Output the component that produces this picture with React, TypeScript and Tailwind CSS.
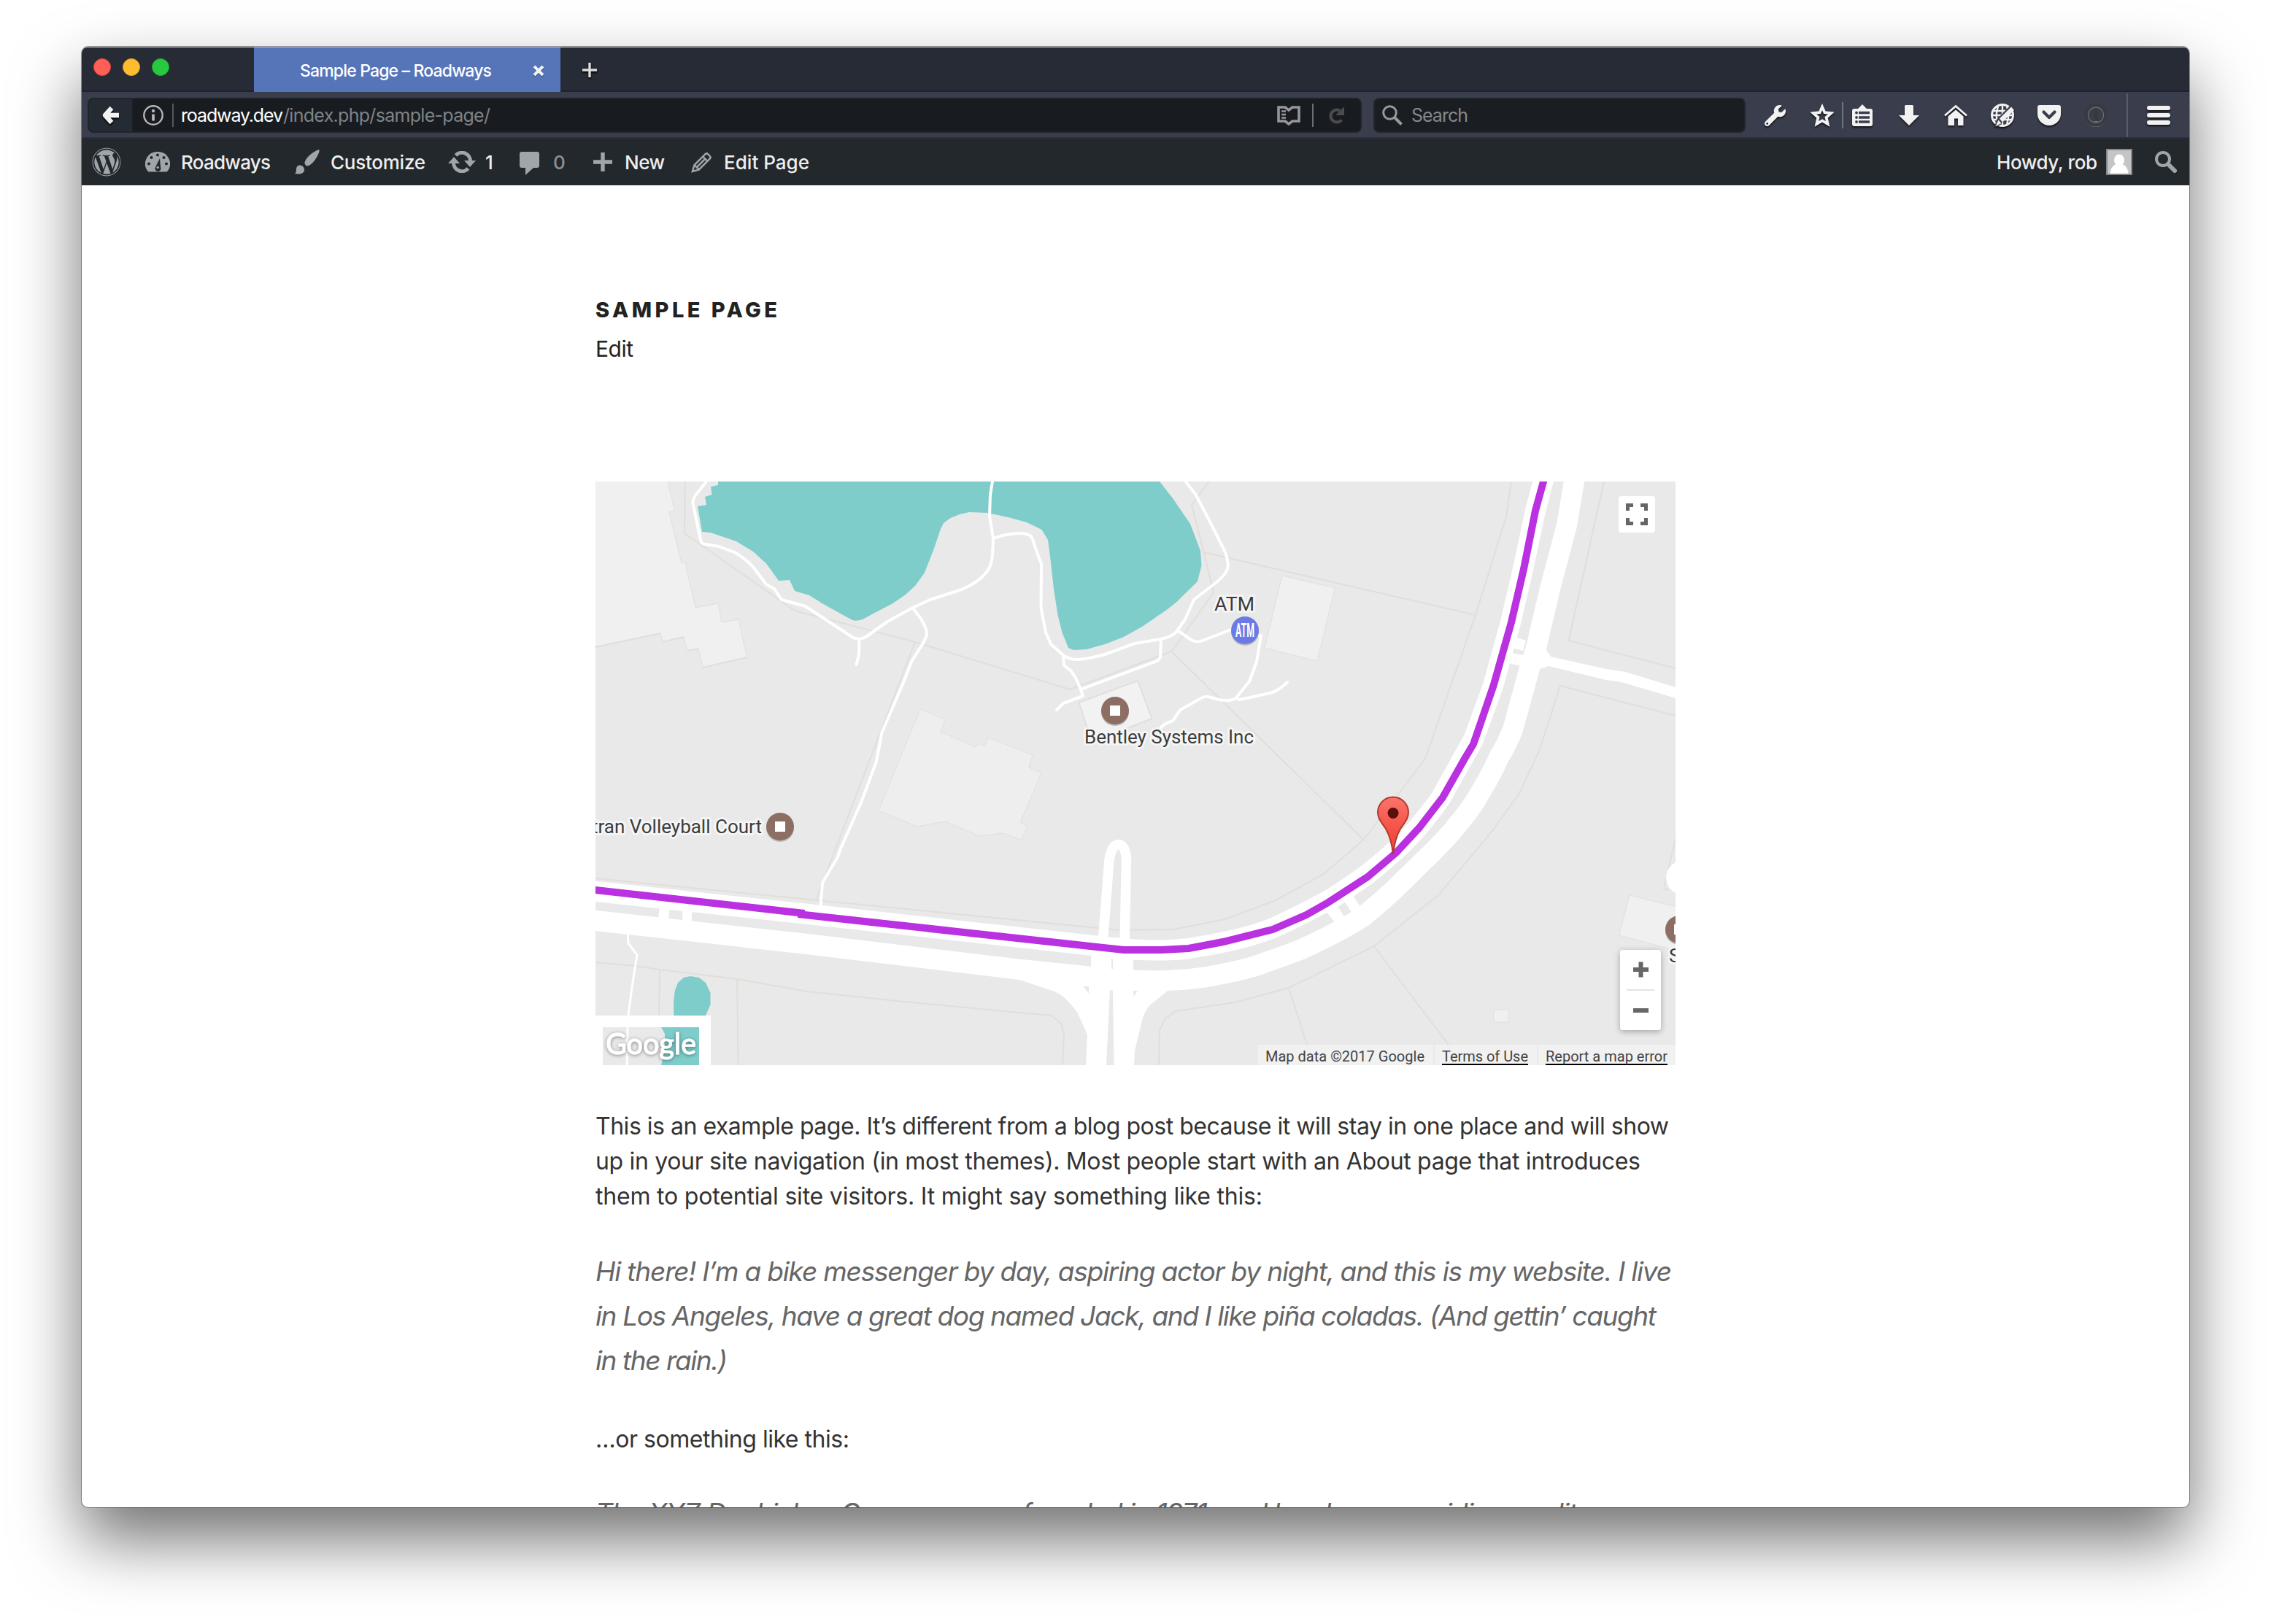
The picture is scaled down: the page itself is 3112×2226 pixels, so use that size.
import { useLayoutEffect, useRef, type ReactNode } from "react";
import { FaWordpress, FaWrench } from "react-icons/fa";

/** A single line of text whose tracking is adjusted to fill the given width. */
function Line({ w, className = "", children }: { w: number; className?: string; children: ReactNode }) {
  const ref = useRef<HTMLSpanElement>(null);
  useLayoutEffect(() => {
    const el = ref.current;
    if (!el) return;
    el.style.letterSpacing = "0px";
    const natural = el.getBoundingClientRect().width;
    const count = (el.textContent ?? "").length;
    if (count > 1) el.style.letterSpacing = `${(w - natural) / (count - 1)}px`;
  }, [w]);
  return (
    <div className={`shrink-0 whitespace-nowrap ${className}`} style={{ width: w }}>
      <span ref={ref} className="inline-block whitespace-nowrap">
        {children}
      </span>
    </div>
  );
}

function TabStrip() {
  return (
    <div className="flex h-[62px] shrink-0 items-center border-b-2 border-[#1f222b] bg-[#272b35] shadow-[inset_0_2px_0_#6f747c]">
      <div className="flex w-[236px] gap-4 pb-1 pl-4">
        <div className="size-6 rounded-full border border-[#e2463f] bg-[#ff5f57]" />
        <div className="size-6 rounded-full border border-[#e0a028] bg-[#ffbd2e]" />
        <div className="size-6 rounded-full border border-[#1aab29] bg-[#28c940]" />
      </div>
      <div className="-mb-0.5 flex h-[62px] w-[420px] items-center bg-[#5675b9] pl-[63px] pt-1 shadow-[inset_0_2px_0_#8099c9]">
        <Line w={263} className="text-[23px] font-medium text-white">Sample Page – Roadways</Line>
        <svg viewBox="0 0 16 16" className="ml-[56px] size-4 drop-shadow-[0_1px_0_#2a3d66]">
          <path d="M2 2l12 12M14 2L2 14" stroke="#f2f4f8" strokeWidth="4" />
        </svg>
      </div>
      <svg viewBox="0 0 20 20" className="ml-[30px] mt-1 size-5 drop-shadow-[0_2px_1px_#000]">
        <path d="M10 0v20M0 10h20" stroke="#dcdcdc" strokeWidth="3.4" />
      </svg>
    </div>
  );
}

function AddressBar() {
  return (
    <div className="flex h-12 w-[1746px] items-center overflow-hidden rounded-lg border-2 border-[#20242b] bg-[#181b1f]">
      <div className="flex h-full w-[61px] items-center justify-center border-r-2 border-[#1c2026] bg-[#252b33]">
        <svg viewBox="0 0 24 26" className="h-[26px] w-6 drop-shadow-[0_2px_1px_#000]">
          <path d="M13 3L4 13l9 10M5 13h18" fill="none" stroke="#f2f2f2" strokeWidth="6.4" strokeLinejoin="round" />
        </svg>
      </div>
      <svg viewBox="0 0 28 28" className="ml-[13px] size-7">
        <circle cx="14" cy="14" r="12.7" fill="none" stroke="#b5b6b8" strokeWidth="2.4" />
        <circle cx="14" cy="8" r="2.2" fill="#b5b6b8" />
        <path d="M14 12.5v9" stroke="#b5b6b8" strokeWidth="3.8" />
      </svg>
      <div className="ml-3 h-8 w-0.5 bg-[#55585f]" />
      <Line w={140} className="ml-2.5 pt-0.5 text-[25px] text-white">roadway.dev</Line>
      <Line w={284} className="pt-0.5 text-[25px] text-[#7f8388]">/index.php/sample-page/</Line>
      <svg viewBox="0 0 32 28" className="ml-auto h-7 w-8" fill="none" stroke="#95979b">
        <path d="M2 3h9l5 4 5-4h9v19h-9l-5 4-5-4H2z" strokeWidth="3.6" />
        <path d="M6 8.5h6M6 13h6M6 17.5h6" strokeWidth="2.4" />
      </svg>
      <div className="ml-4 h-8 w-0.5 bg-[#6b6e75]" />
      <svg viewBox="0 0 22 24" className="ml-5 mr-[22px] h-6 w-[22px]">
        <path d="M18.5 18.5A8.5 8.5 0 1 1 16 5.5" fill="none" stroke="#4b4c4e" strokeWidth="4.2" />
        <path d="M22 0v12H10z" fill="#4b4c4e" />
      </svg>
    </div>
  );
}

function ToolbarIcons() {
  const glow = "shrink-0 drop-shadow-[0_2px_1px_rgba(0,0,0,0.7)]";
  return (
    <>
      <FaWrench className={`ml-[26px] size-[29px] text-[#f2f2f2] ${glow}`} />
      <svg viewBox="0 0 32 32" className={`ml-[34px] size-8 ${glow}`}>
        <path d="M16 4.500l3.400 7.700 8.700.9-6.500 5.900 2 8.900-7.600-4.500-7.600 4.500 2-8.900-6.500-5.900 8.700-.9z" fill="none" stroke="#f2f2f2" strokeWidth="3.800" />
      </svg>
      <div className="ml-[11px] h-9 w-0.5 bg-[#70747e]" />
      <svg viewBox="0 0 28 30" className={`ml-3 h-[30px] w-7 ${glow}`}>
        <path d="M3 6h5l6-6 6 6h5a3 3 0 0 1 3 3v18a3 3 0 0 1-3 3H3a3 3 0 0 1-3-3V9a3 3 0 0 1 3-3z" fill="#f2f2f2" />
        <path d="M9 11.500h15M9 18h15M9 24h15" stroke="#3a3e4b" strokeWidth="3.400" />
        <g fill="#3a3e4b">
          <circle cx="6" cy="11.500" r="1.900" />
          <circle cx="6" cy="18" r="1.900" />
          <circle cx="6" cy="24" r="1.900" />
        </g>
      </svg>
      <svg viewBox="0 0 28 28" className={`ml-9 size-7 ${glow}`}>
        <path d="M8 1.500Q8 0 9.500 0h9Q20 0 20 1.500V14h8L14 28 0 14h8z" fill="#f2f2f2" />
      </svg>
      <svg viewBox="0 0 32 28" className={`ml-[34px] h-7 w-8 ${glow}`}>
        <path d="M1 14.500L16 1.500l15 13" fill="none" stroke="#f2f2f2" strokeWidth="2.800" />
        <path d="M5.500 15.500L16 6.500l10.500 9V28H19V18.500h-5V28H5.500z" fill="#f2f2f2" />
      </svg>
      <svg viewBox="0 0 32 32" className={`ml-8 size-8 ${glow}`}>
        <circle cx="16" cy="16" r="14.500" fill="#3a3e4b" stroke="#f2f2f2" strokeWidth="3" />
        <path d="M16 2v28M2 16h28M4 10h24M4 22h24M10 4c-3 8-3 16 0 24M22 4c3 8 3 16 0 24" fill="none" stroke="#f2f2f2" strokeWidth="2.400" />
        <path d="M5 32l3-10L28 1l5 5-21 24z" fill="#3a3e4b" />
        <path d="M12 20.500L28 4.500l4 4.500L16 25.500z" fill="#f2f2f2" />
        <path d="M10.500 22.500l4 4.500L6.500 31z" fill="#f2f2f2" />
      </svg>
      <svg viewBox="0 0 32 28" className={`ml-8 h-7 w-8 ${glow}`}>
        <path d="M3 0h26q3 0 3 3v9a16 16 0 0 1-32 0V3q0-3 3-3z" fill="#f2f2f2" />
        <path d="M8.500 9.500L16 17l7.500-7.500" fill="none" stroke="#3a3e4b" strokeWidth="4.200" strokeLinecap="round" strokeLinejoin="round" />
      </svg>
      <svg viewBox="0 0 32 32" className="ml-8 size-8 shrink-0">
        <circle cx="16" cy="17.200" r="14" fill="none" stroke="#5f6470" strokeWidth="2" />
        <circle cx="16" cy="15.500" r="13.500" fill="none" stroke="#3a3a3c" strokeWidth="4.500" />
        <circle cx="16" cy="15.800" r="10.600" fill="none" stroke="#666b77" strokeWidth="1.200" />
        <path d="M13 8h6v6l-1 2 1 2v5h-6v-6l1-1-1-2z" fill="#39393b" />
        <path d="M13 24.800h6" stroke="#6a6f7b" strokeWidth="1.600" />
      </svg>
      <div className="ml-[26px] h-full w-0.5 bg-[#5a5d69]" />
      <div className="ml-[26px] mr-[26px] flex w-8 flex-col gap-1 drop-shadow-[0_2px_1px_rgba(0,0,0,0.7)]">
        <div className="h-1.5 rounded-[3px] bg-[#f2f2f2]" />
        <div className="h-1.5 rounded-[3px] bg-[#f2f2f2]" />
        <div className="h-1.5 rounded-[3px] bg-[#f2f2f2]" />
      </div>
    </>
  );
}

function NavBar() {
  return (
    <div className="flex h-16 shrink-0 items-center border-b-2 border-[#2c303a] bg-[#3a3e4c] pl-2 pt-0.5">
      <AddressBar />
      <div className="ml-4 flex h-12 w-[510px] items-center rounded-lg border-2 border-[#22262c] bg-[#1a1e22]">
        <svg viewBox="0 0 28 28" className="ml-2.5 size-7" fill="none" stroke="#97999c">
          <circle cx="10.500" cy="10.500" r="8.800" strokeWidth="3" />
          <path d="M16.500 16.500l10 10" strokeWidth="4" />
        </svg>
        <Line w={78} className="ml-3 pt-0.5 text-[25px] text-[#84888d]">Search</Line>
      </div>
      <ToolbarIcons />
    </div>
  );
}

function AdminBar() {
  return (
    <div className="flex h-16 shrink-0 items-center bg-[#23282d] text-[26px] font-medium text-[#eeeeee]">
      <FaWordpress className="ml-3.5 size-10 shrink-0 text-[#a0a5aa]" />
      <svg viewBox="0 0 34 28" className="ml-[33px] h-7 w-[34px] shrink-0">
        <path d="M17 0a16.500 16.500 0 0 1 14 26q-1 1.500-2.500 1.500h-23Q4 27.500 3 26A16.500 16.500 0 0 1 17 0z" fill="#a0a5aa" />
        <g fill="#23282d">
          <circle cx="17" cy="4.500" r="2" />
          <circle cx="8.500" cy="8" r="2" />
          <circle cx="25.500" cy="8" r="2" />
          <circle cx="5" cy="16.500" r="2" />
          <circle cx="29" cy="16.500" r="2" />
          <path d="M20 9l1 12a4 4 0 1 1-7 0z" />
        </g>
        <circle cx="17.200" cy="21.500" r="1.800" fill="#a0a5aa" />
      </svg>
      <Line w={123} className="ml-[15px]">Roadways</Line>
      <svg viewBox="0 0 34 34" className="ml-[33px] size-[34px] shrink-0" fill="#a0a5aa">
        <path d="M33.500.5c1 2-3 11-9 17.500-3 3-6 4.500-8 4.500-2-.5-3-2.500-3-4.500 0-2 2-5.500 5-8.500C24.500 4 32-.5 33.500.5z" />
        <path d="M6.500 21.500c4 0 7 3 6.500 7-.5 4-6 6-13 4.500 3-2.500 1-4.500 2.500-8.500.7-2 2-3 4-3z" />
      </svg>
      <Line w={130} className="ml-[15px]">Customize</Line>
      <svg viewBox="0 0 38 30" className="ml-[31px] h-[30px] w-[38px] shrink-0">
        <path d="M10.500 6A11.500 11.500 0 0 1 30.500 14" fill="none" stroke="#a0a5aa" strokeWidth="5" />
        <path d="M27.500 24A11.500 11.500 0 0 1 7.500 16" fill="none" stroke="#a0a5aa" strokeWidth="5" />
        <path d="M22 13h16l-8 9zM0 17h16L8 8z" fill="#a0a5aa" />
      </svg>
      <Line w={11} className="ml-[13px]">1</Line>
      <svg viewBox="0 0 27 32" className="ml-9 mt-1 h-8 w-[27px] shrink-0">
        <path d="M3 0h21q3 0 3 3v16q0 3-3 3h-5L8 32V22H3q-3 0-3-3V3q0-3 3-3z" fill="#a0a5aa" />
      </svg>
      <Line w={15} className="ml-[19px] text-[#8c9094]">0</Line>
      <svg viewBox="0 0 28 28" className="ml-[39px] size-7 shrink-0">
        <path d="M14 1v26M1 14h26" stroke="#a0a5aa" strokeWidth="5.400" />
      </svg>
      <Line w={55} className="ml-4">New</Line>
      <svg viewBox="0 0 30 30" className="ml-9 size-[29px] shrink-0" fill="none" stroke="#a0a5aa" strokeWidth="2.600">
        <path d="M2 28l2.500-9L20 3.500q2-2 4 0l2.500 2.500q2 2 0 4L11 25.500zM17 7l6 6M5 19l6 6M20 10L8 22" />
      </svg>
      <Line w={117} className="ml-4">Edit Page</Line>
      <Line w={138} className="ml-auto">Howdy, rob</Line>
      <svg viewBox="0 0 36 36" className="ml-3 size-9 shrink-0">
        <rect width="36" height="36" fill="#82878c" />
        <rect x="2" y="2" width="32" height="32" fill="#c5c5c5" />
        <ellipse cx="18" cy="15.500" rx="7" ry="8" fill="#fff" />
        <path d="M5.500 34c.5-7 4-12 9-13h7c5 1 8.500 6 9 13z" fill="#fff" />
      </svg>
      <svg viewBox="0 0 30 30" className="ml-[31px] mr-[17px] size-[30px] shrink-0" fill="none" stroke="#a0a5aa">
        <circle cx="11" cy="11" r="9" strokeWidth="4" />
        <path d="M18 18l9 9" strokeWidth="6" strokeLinecap="round" />
      </svg>
    </div>
  );
}

function PlaceDot({ x, y }: { x: number; y: number }) {
  return (
    <g transform={`translate(${x} ${y})`}>
      <circle cy="2" r="19" fill="#b9b9b9" />
      <circle r="19" fill="#8d6e63" />
      <rect x="-7" y="-7" width="14" height="14" fill="#fff" />
    </g>
  );
}

function MapDrawing() {
  return (
    <svg viewBox="0 0 1480 800" className="block h-[800px] w-[1480px]">
      <defs>
        <linearGradient id="pin" x1="0" y1="0" x2="0" y2="1">
          <stop offset="0" stopColor="#fb7469" />
          <stop offset="0.7" stopColor="#f44a3f" />
        </linearGradient>
        <filter id="soft" x="-20%" y="-20%" width="140%" height="150%">
          <feDropShadow dx="0" dy="1" stdDeviation="2.500" floodColor="#000" floodOpacity="0.45" />
        </filter>
      </defs>
      <rect width="1480" height="800" fill="#e9e9e9" />

      {/* buildings */}
      <g fill="#f0f0f0" stroke="#e1dfdc" strokeWidth="1">
        <path d="M-2-2H99V0L108.500 40 101 42 118 112 123 111 137 173 168 167 173 193 196 189 207.500 241 147 255 141 229 126 232 121 213 92 220 89 208 -2 227z" />
        <path fill="#eeeeee" d="M445 312L479 326 473 343 521 364 525 359 533 362 539 351 599 375 594 392 611 399 582.500 467 592 472 583.500 491 558 482 526 486 480 466 440 473 388 451z" />
        <path d="M941 129L1013.500 146 989 246 917 228z" />
        <path strokeWidth="2" fill="#f2f2f2" d="M743 273L762.500 325 680 357 662.500 303z" />
        <path d="M1417 567L1482 583V643L1402.500 622z" />
        <path d="M1231 724h20v17h-20z" />
      </g>

      {/* parcel lines */}
      <g fill="none" stroke="#e2ded8" strokeWidth="2">
        <path d="M0 227L89 208M92 220L121 213M126 232L141 229M147 255L207.500 241" />
        <path d="M123 0L122 71 273 177 438 220 650 285 789.500 233 847 152 833.500 97 817 32 841 0" />
        <path d="M833.500 97L1206 183M789.500 233L1052.500 491M438 220L302 574" />
        <path d="M1255 0L1248 48 1206 183 1137 380 1052.500 491 998 538 932 574 863 600 792 614 717 615 688 612 0 544" />
        <path d="M1382 0L1333.500 218 1480 256" />
        <path d="M1480 321L1322 280 1293 370 1265.500 428 1228 480 1156 566 1067 637 950 694 876 714 795 726 780 737 773 752 772 800" />
        <path d="M1067 637L1190 800M950 694L984 800" />
        <path d="M0 659L54 664 88 669 194 682 290 699 423 713 625 732 638 743 642 758 640 800M88 669L86 800M194 682L195.500 800" />
        <path d="M1480 490L1464 558 1470 560" />
      </g>

      {/* lakes */}
      <g fill="#7ecdcb">
        <path d="M168 0V5L158 7 159.500 18 150 21 152 32 140 34 146 69 157.500 70 193 82 216 96 234.500 113 251 136 266 135 273 150 293 156 310.500 167 341 184 352 190 Q357 192 366 189L384.500 179 407.500 167 425 155 438 143 451 125 463.500 93 473 65 477 57 486.500 50 499 45 512 42 537.500 43 565.500 49 591 56 611.500 66 620 80 623 103 628 147 633.500 183 639.500 207 648 228 655 231 673 230 698 223 724 213 749 199 784 175 796.500 165 825 137 830.500 115 829 95 815 58 791 23 773 0z" />
        <path d="M130 678L121 680 113 687 109 697 107 713 107.500 740H148L151 732 157.500 717V701L151 687 142 680z" />
      </g>

      {/* footpaths */}
      <g fill="none" stroke="#fff" strokeWidth="4" strokeLinejoin="round" strokeLinecap="round">
        <path d="M152 0L138.500 17Q133 24 133.500 30L144 80Q145 86 151 86L169 89 190.500 97 Q206 106 216 117L234 141 245 147 255 162 287.500 171 310.500 186 351.500 213Q361 219 372 212L400 192 434.500 173 458.500 162 499 149Q512 144 522 137T537.500 122 544 100L545 78 540 47 541 18 544 0" />
        <path d="M361.500 216L361 237 357.500 251" />
        <path d="M434.500 173L446 188Q456 205 453.500 212L448 223 433 247 423 273 392 345 389.500 360 384.500 385 364 440 336 503 331 517 321 533 311 550 308.500 582" />
        <path d="M545 78Q565 71 581 71T599 79 611 113L610.500 173 617 207 624 223 641 238Q649 244 660 244T698 237L739 222 775 216Q793 212 797.500 204L808.500 188 820 162 846 142 Q862 130 865.500 121T862 95L841 53 822.500 18Q815 8 807-2" />
        <path d="M641 238L642 252 651 259 657.500 268 665 285 668 294 641 304 632 313" />
        <path d="M665 285L767 247Q773 245 774 240L775 216" />
        <path d="M797.500 204L815 216Q823 222 832 218L871 203" />
        <path d="M909 211h3L906 247 896 274 877.500 297" />
        <path d="M948 275Q936 287 924.500 290L883 299 877.500 297Q869 302 854 299L843 296Q836 293 830 297L801.500 313 791 328Q776 333 773 340" />
        <path strokeWidth="3" d="M44 618L45 633 57 649 50 693 44 740" />
      </g>

      {/* roads */}
      <g fill="none" stroke="#fff" strokeWidth="28" strokeLinejoin="round">
        <path d="M-20 560L0 562 282 592 700 638C740 643 780 644 813 640C850 634 890 627 926 613C960 598 980 587 1003 575C1025 562 1042 549 1057 539C1072 527 1086 515 1096 506C1109 494 1119 484 1128 473C1141 457 1152 444 1160 431C1170 412 1180 396 1186 384L1203 354 1230 280 1254 193 1271 120 1288 40 1298.500 0 1303-20" />
        <path d="M-20 600L0 602 290 634 578 668.500 680 679C715 684 750 684.500 780 684C805 683 830 681 848 677C870 673 890 669 909 662.500C932 654 952 648 970 640C1000 626 1028 612 1051 597C1072 580 1088 566 1102 552L1144 511C1158 497 1169 486 1179 473C1192 458 1204 442 1212 427C1225 406 1232 392 1239 376C1248 362 1253 350 1257 340L1280 256 1289 228 1308 147 1331 60 1341 0 1344-20" />
        <path d="M695 634L704 518Q708 497 717 497.500T727.500 518L725 634" strokeWidth="13.500" />
      </g>
      <g fill="#fff">
        <path d="M1301 228L1309 240 1385 257 1411 261 1480 282V297L1406 275 1385 272 1306 253 1294 257 1285 240z" />
        <path d="M1260 213L1275 218 1271 232 1256 228zM1256 235L1272 238 1268 253 1251 249zM88 583L101 585 100 603 86 600zM119 587L132 589V606L119 604zM1002 590L1017 582 1027 598 1014 606zM1026 575L1038 568 1049 584 1037 592z" />
        <path d="M679 645H737V690H679z" />
        <path d="M570 676L578 682 629 699Q640 704 647 712 656 722 660 727L674 758 672 800H738L739 780 750 735Q753 726 759.500 718L784 698 780 680z" />
        <circle cx="1490" cy="543" r="23" />
      </g>
      <path d="M707 654h2v14h-2zM705 697L709 698 710.500 800H700zM669 692h7v10zM737 698h6L737.500 706z" fill="#e9e9e9" />

      {/* traced route */}
      <path
        d="M-5 559.500L0 560 282 591.500V593.500L724 642H775.500L813 640 860 631 928 614 974 594 1004 577 1058 542 1097 509 1128.500 475 1161 433 1191 380 1203 360 1230.500 280 1255 193 1272 120 1288 40 1299 0 1302-10"
        fill="none"
        stroke="#b931e0"
        strokeWidth="10"
      />

      {/* places */}
      <g fontFamily="Roboto, sans-serif" fontSize="26" fill="#3c3c3c" stroke="#f5f5f5" strokeWidth="6" strokeLinejoin="round" paintOrder="stroke">
        <text x="670" y="359" textLength="232" lengthAdjust="spacingAndGlyphs">Bentley Systems Inc</text>
        <text x="848" y="177" textLength="55" lengthAdjust="spacingAndGlyphs">ATM</text>
        <text x="228" y="482" textAnchor="end">tran Volleyball Court</text>
        <text x="1471" y="659">S</text>
      </g>
      <PlaceDot x={712} y={314} />
      <PlaceDot x={253} y={473} />
      <PlaceDot x={1485} y={614} />
      <circle cx="890" cy="206" r="19" fill="#bdbdbd" />
      <circle cx="890" cy="204" r="19" fill="#6b7be3" />
      <text x="877" y="213" fontFamily="Roboto, sans-serif" fontWeight="700" fontSize="25" fill="#fff" textLength="26" lengthAdjust="spacingAndGlyphs">ATM</text>

      {/* marker */}
      <path d="M1093 511C1091 492 1087 483 1083 476 1077 467 1072 462 1072 453.500A21 21 0 0 1 1114 453.500C1114 462 1109 467 1103 476 1099 483 1095 492 1093 511z" fill="url(#pin)" stroke="#b3382e" strokeWidth="2" />
      <circle cx="1093" cy="454.500" r="7.500" fill="#590f0c" />

      {/* logo tile */}
      <rect x="0" y="732" width="158" height="68" fill="#fff" />
      <rect x="10" y="748" width="132" height="52" fill="#e9e9e9" />
      <path d="M90 748h52v52H90L95 780V757z" fill="#7ecdcb" />
      <path d="M44 748L43 800" stroke="#fff" strokeWidth="3" />
      <text x="14" y="785" fontFamily="Lato, sans-serif" fontSize="40" fontWeight="400" fill="#fff" stroke="#fff" strokeWidth="1" textLength="124" lengthAdjust="spacingAndGlyphs" filter="url(#soft)">
        Google
      </text>
    </svg>
  );
}

function MapPanel() {
  return (
    <div className="relative h-[800px] w-[1480px] overflow-hidden">
      <MapDrawing />
      <div className="absolute right-7 top-5 flex size-[50px] items-center justify-center rounded-sm bg-white">
        <svg viewBox="0 0 30 30" className="size-[30px]" fill="none" stroke="#666" strokeWidth="5">
          <path d="M2.500 10V2.500H10M20 2.500h7.500V10M27.500 20v7.500H20M10 27.500H2.500V20" />
        </svg>
      </div>
      <div className="absolute bottom-12 right-5 flex h-[110px] w-14 flex-col items-center rounded bg-white shadow-[0_2px_8px_rgba(0,0,0,0.3)]">
        <svg viewBox="0 0 56 54" className="h-[54px] w-14">
          <path d="M28.500 16.500v21M18 27h21" stroke="#666" strokeWidth="6" />
        </svg>
        <div className="h-0.5 w-[38px] bg-[#e3e3e3]" />
        <svg viewBox="0 0 56 54" className="h-[54px] w-14">
          <path d="M18 27h21" stroke="#666" strokeWidth="6" />
        </svg>
      </div>
      <div className="absolute bottom-0 right-0 flex h-7 gap-0.5 font-[Roboto] text-[20px] leading-7 text-[#444]">
        <div className="w-60 bg-[#f2f2f2]/80 pl-2.5">
          <Line w={218} className="pt-0.5">Map data ©2017 Google</Line>
        </div>
        <div className="w-[140px] bg-[#f2f2f2]/80 pl-2.5">
          <Line w={118} className="h-7 border-b-2 border-black pt-0.5">Terms of Use</Line>
        </div>
        <div className="w-[188px] bg-[#f2f2f2]/80 pl-2.5">
          <Line w={167} className="h-7 border-b-2 border-black pt-0.5">Report a map error</Line>
        </div>
      </div>
    </div>
  );
}

export default function App() {
  return (
    <div className="h-[2226px] w-[3112px] overflow-hidden bg-white px-28 pt-16 font-[Inter]">
      <div className="flex h-[2002px] w-[2888px] flex-col overflow-hidden rounded-[9px] bg-white shadow-[0_0_0_1px_rgba(0,0,0,0.35),0_44px_90px_rgba(0,0,0,0.56)]">
        <TabStrip />
        <NavBar />
        <AdminBar />
        <main className="ml-[704px] w-[1480px] pt-[151px] text-[#222]">
          <Line w={249} className="text-[29px] font-extrabold leading-10">SAMPLE PAGE</Line>
          <Line w={52} className="mt-[13px] text-[30px] leading-10">Edit</Line>
          <div className="mt-[162px]">
            <MapPanel />
          </div>
          <div className="mt-[60px] text-[32px] leading-[48px] text-[#333]">
            <Line w={1471}>This is an example page. It’s different from a blog post because it will stay in one place and will show</Line>
            <Line w={1432}>up in your site navigation (in most themes). Most people start with an About page that introduces</Line>
            <Line w={914}>them to potential site visitors. It might say something like this:</Line>
          </div>
          <div className="mt-12 text-[37px] italic leading-[61.2px] text-[#666]">
            <Line w={1475}>Hi there! I’m a bike messenger by day, aspiring actor by night, and this is my website. I live</Line>
            <Line w={1454}>in Los Angeles, have a great dog named Jack, and I like piña coladas. (And gettin’ caught</Line>
            <Line w={181}>in the rain.)</Line>
          </div>
          <Line w={348} className="mt-[53px] text-[32px] leading-[48px] text-[#333]">…or something like this:</Line>
          <Line w={1366} className="mt-[46px] text-[37px] italic leading-[61.2px] text-[#666]">
            The XYZ Doohickey Company was founded in 1971, and has been providing quality
          </Line>
        </main>
      </div>
    </div>
  );
}
